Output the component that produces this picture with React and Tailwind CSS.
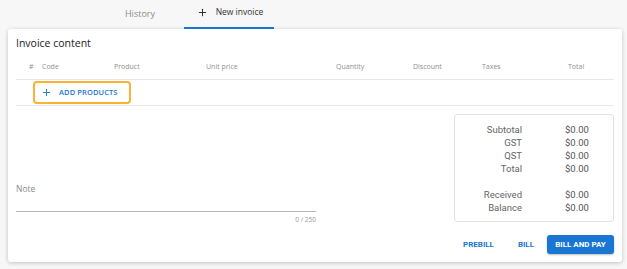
import { Plus } from 'lucide-react';

const cols = [
  { label: '#', w: 'w-[13px]' },
  { label: 'Code', w: 'w-[72px]' },
  { label: 'Product', w: 'w-[92px]' },
  { label: 'Unit price', w: 'w-[130px]' },
  { label: 'Quantity', w: 'w-[77px]' },
  { label: 'Discount', w: 'w-[69px]' },
  { label: 'Taxes', w: 'w-[86px]' },
  { label: 'Total', w: 'w-[30px]' },
];

const totals = [
  ['Subtotal', '$0.00'],
  ['GST', '$0.00'],
  ['QST', '$0.00'],
  ['Total', '$0.00'],
  ['', ''],
  ['Received', '$0.00'],
  ['Balance', '$0.00'],
];

export default function App() {
  return (
    <div className="w-[627px] h-[269px] bg-[#f7f7f7] overflow-hidden font-['Open_Sans',sans-serif]">
      {/* tabs */}
      <div className="flex h-[29px] pl-[94px]">
        <div className="w-[90px] flex items-center justify-center pb-[2px] pl-[2px] text-[9px] text-[#8c8c8c]">
          History
        </div>
        <div className="w-[90px] flex items-center justify-center gap-[8px] pb-[2px] pl-[2px] text-[8.5px] text-[#333] border-b-2 border-[#1976d2]">
          <Plus className="w-[11px] h-[11px]" strokeWidth={2.2} />
          <span>New invoice</span>
        </div>
      </div>

      {/* card */}
      <div className="mx-[8px] w-[614px] bg-white rounded-[3px] shadow-[0_1px_4px_rgba(0,0,0,0.22)] px-[8px] pt-[7px] pb-[8px]">
        <div className="h-[14px] leading-[14px] text-[10.5px] text-[#222]">Invoice content</div>

        <div className="mt-[6px] h-[24px] flex items-center pl-[13px] border-b border-[#e8e8e8] text-[7px] text-[#8f8f8f]">
          {cols.map((c) => (
            <div key={c.label} className={`${c.w} shrink-0`}>{c.label}</div>
          ))}
        </div>

        <div className="h-[26px] flex items-center pl-[17px] border-b border-[#e8e8e8]">
          <button className="w-[98px] h-[23px] flex items-center gap-[7px] pl-[6px] border-2 border-[#f9b233] rounded-[4px] text-[#1976d2]">
            <Plus className="w-[11px] h-[11px] text-[#1976d2]" strokeWidth={2} />
            <span className="text-[7.5px] font-semibold tracking-[0.1px]">ADD PRODUCTS</span>
          </button>
        </div>

        <div className="flex justify-between">
          <div className="w-[300px] pt-[77px]">
            <div className="text-[8.5px] text-[#8a8a8a] leading-[12px]">Note</div>
            <div className="mt-[16px] border-b border-[#b5b5b5]" />
            <div className="mt-[3px] text-right text-[6.5px] text-[#9a9a9a] leading-[10px]">0 / 250</div>
          </div>

          <div className="mt-[8px] w-[160px] h-[108px] border border-[#e3e3e3] rounded-[3px] pt-[8px] font-['Roboto',sans-serif] text-[9.5px] text-[#666]">
            {totals.map(([k, v], i) => (
              <div key={i} className="flex h-[13px] leading-[13px]">
                <div className="w-[67px] text-right">{k}</div>
                <div className="ml-[43px] text-[#555]">{v}</div>
              </div>
            ))}
          </div>
        </div>

        <div className="mt-[10px] flex justify-end items-center font-['Roboto',sans-serif] font-bold text-[8px] text-[#1976d2]">
          <button className="px-[6px] h-[19px]">PREBILL</button>
          <button className="ml-[10px] px-[8px] h-[19px]">BILL</button>
          <button className="ml-[5px] w-[67px] h-[19px] bg-[#1976d2] text-white rounded-[3px] shadow-[0_1px_2px_rgba(0,0,0,0.25)]">
            BILL AND PAY
          </button>
        </div>
      </div>
    </div>
  );
}
